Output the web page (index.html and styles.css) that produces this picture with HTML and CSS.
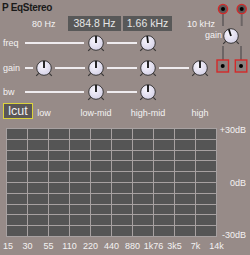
FILE: index.html
```html
<!DOCTYPE html>
<html>
<head>
<meta charset="utf-8">
<link rel="stylesheet" href="styles.css">
</head>
<body>
<svg class="defs" width="0" height="0">
  <defs>
    <radialGradient id="kg" cx="40%" cy="35%" r="70%">
      <stop offset="0" stop-color="#f7f5fd"/>
      <stop offset="1" stop-color="#d4d0e6"/>
    </radialGradient>
    <g id="kb">
      <circle r="7.3" fill="url(#kg)" stroke="#3a3838" stroke-width="1"/>
      <path d="M-5.3 5.3 L-7.8 7.8 M5.3 5.3 L7.8 7.8" stroke="#3a3838" stroke-width="1.2" fill="none"/>
    </g>
  </defs>
</svg>
<div class="panel">
  <div class="top">
    <div class="title">P EqStereo</div>
    <div class="display">
      <span class="hz lo">80 Hz</span>
      <span class="box b1">384.8 Hz</span>
      <span class="box b2">1.66 kHz</span>
      <span class="hz hi">10 kHz</span>
    </div>

    <svg class="io" width="34" height="80" viewBox="0 0 34 80">
      <g stroke="#6c6565" stroke-width="2">
        <line x1="7" y1="14" x2="7" y2="26"/>
        <line x1="25.7" y1="14" x2="25.7" y2="26"/>
        <line x1="7" y1="46" x2="7" y2="60"/>
        <line x1="25" y1="46" x2="25" y2="60"/>
      </g>
      <g stroke="#d42a2a" stroke-width="1.4">
        <circle cx="7" cy="9" r="4.6" fill="#5e5858"/>
        <circle cx="25.7" cy="9" r="4.6" fill="#5e5858"/>
        <rect x="1" y="60" width="11.5" height="12" fill="#8c807e"/>
        <rect x="19.3" y="60" width="11.5" height="12" fill="#8c807e"/>
      </g>
      <g fill="#000">
        <circle cx="7" cy="9" r="2"/>
        <circle cx="25.7" cy="9" r="2"/>
        <circle cx="6.7" cy="66" r="2"/>
        <circle cx="25" cy="66" r="2"/>
      </g>
      <g transform="translate(15 36)">
        <use href="#kb"/>
        <line x1="0" y1="0" x2="-2.2" y2="-6.8" stroke="#111" stroke-width="1.8"/>
      </g>
    </svg>
    <span class="lbl out-gain">gain</span>

    <span class="lbl name r-freq">freq</span>
    <span class="line r-freq c2-5 wide"></span>
    <svg class="knob r-freq c5" viewBox="-8 -8 16 16"><use href="#kb"/><line class="ptr" x1="0" y1="0" x2="0" y2="-7"/></svg>
    <span class="line r-freq c6"></span>
    <svg class="knob r-freq c7" viewBox="-8 -8 16 16"><use href="#kb"/><line class="ptr" x1="0" y1="0" x2="-0.8" y2="-7"/></svg>

    <span class="lbl name r-gain">gain</span>
    <span class="line r-gain c2 short"></span>
    <svg class="knob r-gain c3" viewBox="-8 -8 16 16"><use href="#kb"/><line class="ptr" x1="0" y1="0" x2="0" y2="-7"/></svg>
    <span class="line r-gain c4"></span>
    <svg class="knob r-gain c5" viewBox="-8 -8 16 16"><use href="#kb"/><line class="ptr" x1="0" y1="0" x2="0" y2="-7"/></svg>
    <span class="line r-gain c6"></span>
    <svg class="knob r-gain c7" viewBox="-8 -8 16 16"><use href="#kb"/><line class="ptr" x1="0" y1="0" x2="0" y2="-7"/></svg>
    <span class="line r-gain c8"></span>
    <svg class="knob r-gain c9" viewBox="-8 -8 16 16"><use href="#kb"/><line class="ptr" x1="0" y1="0" x2="0" y2="-7"/></svg>

    <span class="lbl name r-bw">bw</span>
    <span class="line r-bw c2-5 wide"></span>
    <svg class="knob r-bw c5" viewBox="-8 -8 16 16"><use href="#kb"/><line class="ptr" x1="0" y1="0" x2="0" y2="-7"/></svg>
    <span class="line r-bw c6"></span>
    <svg class="knob r-bw c7" viewBox="-8 -8 16 16"><use href="#kb"/><line class="ptr" x1="0" y1="0" x2="0" y2="-7"/></svg>

    <span class="lcut">lcut</span>
    <span class="band c3"><span>low</span></span>
    <span class="band c5"><span>low-mid</span></span>
    <span class="band c7"><span>high-mid</span></span>
    <span class="band c9"><span>high</span></span>
  </div>

  <div class="chart">
    <div class="graph">
      <div class="row"></div><div class="row"></div><div class="row"></div><div class="row"></div><div class="row"></div>
      <div class="row"></div><div class="row"></div><div class="row"></div><div class="row"></div><div class="row"></div>
    </div>
    <div class="db">
      <span>+30dB</span>
      <span>0dB</span>
      <span>-30dB</span>
    </div>
  </div>
  <div class="freqs">
    <span>15</span><span>30</span><span>55</span><span>110</span><span>220</span><span>440</span><span>880</span><span>1k76</span><span>3k5</span><span>7k</span><span>14k</span>
  </div>
</div>
</body>
</html>
```

FILE: styles.css
```css
html, body {
  margin: 0;
  padding: 0;
}
body {
  width: 250px;
  height: 255px;
  overflow: hidden;
  background: #978b88;
  font-family: "Liberation Sans", Arial, sans-serif;
  color: #f4f2f2;
  font-size: 9px;
}
.defs {
  display: block;
  width: 0;
  height: 0;
  overflow: hidden;
}
.panel {
  width: 250px;
  height: 255px;
}
.top {
  display: grid;
  grid-template-columns: 24px 12px 16px 36px 16px 36px 16px 36px 16px 8px 34px;
  grid-template-rows: 16px 15px 24px 25px 24px 18px;
  height: 122px;
}
.title {
  grid-column: 1 / 11;
  grid-row: 1;
  padding-left: 2px;
  font-size: 10px;
  font-weight: bold;
  line-height: 16px;
  color: #1a1a1a;
  letter-spacing: -0.3px;
}
.display {
  grid-column: 1 / 11;
  grid-row: 2;
  display: flex;
  align-items: center;
}
.hz {
  line-height: 10px;
}
.hz.lo {
  margin-left: 32px;
  width: 36px;
}
.hz.hi {
  margin-left: 15px;
}
.box {
  height: 15px;
  line-height: 15px;
  background: #585858;
  color: #e6e6e6;
  font-size: 10.5px;
  text-align: center;
}
.box.b1 {
  width: 53px;
}
.box.b2 {
  width: 49px;
  margin-left: 2px;
}
.io {
  grid-column: 11 / 12;
  grid-row: 1 / 5;
  display: block;
}
.lbl {
  line-height: 10px;
}
.out-gain {
  grid-column: 9 / 12;
  grid-row: 3;
  justify-self: end;
  align-self: start;
  margin-right: 28px;
  margin-top: -1px;
}
.name {
  grid-column: 1;
  align-self: center;
  padding-left: 3px;
}
.r-freq { grid-row: 3; }
.r-gain { grid-row: 4; }
.r-bw { grid-row: 5; }
.c2 { grid-column: 2; }
.c2-5 { grid-column: 2 / 5; }
.c3 { grid-column: 3; }
.c4 { grid-column: 4; }
.c5 { grid-column: 5; }
.c6 { grid-column: 6; }
.c7 { grid-column: 7; }
.c8 { grid-column: 8; }
.c9 { grid-column: 9; }
.line {
  align-self: center;
  height: 2px;
  background: #efecef;
  margin: 0 3px;
}
.line.wide {
  margin: 0 4px 0 1px;
}
.line.short {
  margin: 0 3px 0 1px;
}
.knob {
  width: 16px;
  height: 16px;
  align-self: center;
  overflow: visible;
  display: block;
}
.ptr {
  stroke: #111;
  stroke-width: 1.8;
}
.lcut {
  grid-column: 1 / 3;
  grid-row: 6;
  align-self: start;
  justify-self: start;
  margin: -1px 0 0 3px;
  width: 28px;
  height: 14px;
  border: 1px solid #dcd43c;
  background: #5a5757;
  color: #f0f0f0;
  font-size: 12.5px;
  line-height: 14px;
  text-align: center;
}
.band {
  grid-row: 6;
  display: flex;
  justify-content: center;
  align-items: center;
  white-space: nowrap;
  line-height: 10px;
}
.chart {
  display: flex;
  align-items: flex-start;
  height: 119px;
}
.graph {
  width: 209px;
  height: 107px;
  margin: 6px 0 0 6px;
  padding: 1px;
  background: #a7a1a1;
  display: grid;
  grid-template-rows: repeat(10, 1fr);
  row-gap: 1px;
}
.row {
  background: repeating-linear-gradient(to right, #555555 0 20px, #a7a1a1 20px 21px);
}
.db {
  width: 29px;
  height: 115px;
  margin-top: 3px;
  display: flex;
  flex-direction: column;
  justify-content: space-between;
  align-items: flex-end;
  line-height: 10px;
}
.freqs {
  display: flex;
  margin-left: -4px;
  line-height: 10px;
}
.freqs span {
  width: 21px;
  flex: none;
  text-align: center;
}
.freqs span:first-child {
  padding-left: 3px;
  width: 18px;
}
```
